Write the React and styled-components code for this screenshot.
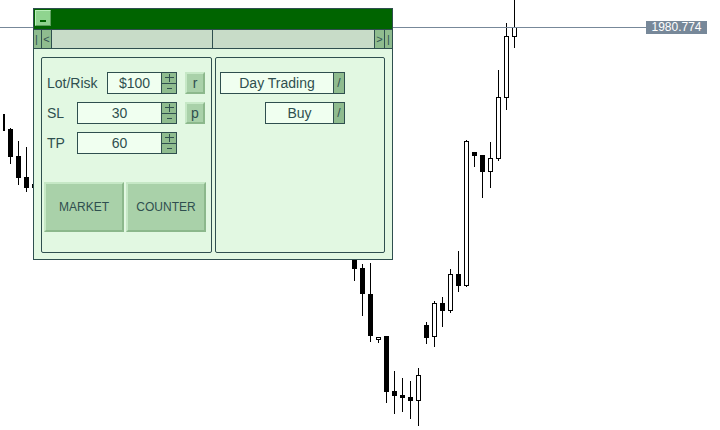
import React from "react";
import styled, { createGlobalStyle } from "styled-components";

const INK = "#2f4f4f";
const SEA = "#8fbc8f";
const FIELD = "#f0fff0";

const GlobalStyle = createGlobalStyle`
  html, body { margin: 0; padding: 0; background: #fff; overflow: hidden; }
  body { font-family: "Liberation Sans", Arial, sans-serif; }
`;

// [x, wickTop, wickBottom, bodyTop, bodyBottom, bull]
const candles = [
  [10, 128, 164, 129, 157, 0],
  [18, 141, 185, 156, 178, 0],
  [26, 147, 192, 177, 188, 0],
  [34, 150, 196, 184, 188, 0],
  [354, 200, 281, 200, 269, 0],
  [362, 264, 316, 268, 294, 0],
  [370, 263, 342, 294, 336, 0],
  [378, 337, 343, 337, 340, 1],
  [386, 336, 403, 336, 392, 0],
  [394, 371, 414, 391, 396, 0],
  [402, 378, 412, 395, 398, 0],
  [410, 381, 419, 397, 401, 0],
  [418, 368, 426, 375, 401, 1],
  [426, 322, 344, 325, 338, 0],
  [434, 301, 347, 303, 337, 1],
  [442, 297, 327, 303, 311, 0],
  [450, 269, 313, 274, 311, 1],
  [458, 251, 292, 274, 286, 0],
  [466, 140, 287, 141, 286, 1],
  [474, 152, 167, 152, 156, 0],
  [482, 155, 198, 155, 172, 0],
  [490, 142, 188, 158, 172, 1],
  [498, 70, 161, 97, 159, 1],
  [506, 23, 110, 36, 98, 1],
  [514, 0, 48, 27, 37, 1],
];

const Stage = styled.div`
  position: relative;
  width: 720px;
  height: 430px;
  overflow: hidden;
  background: #fff;
`;

const ChartSvg = styled.svg`
  position: absolute;
  left: 0;
  top: 0;
`;

const PriceTag = styled.div`
  position: absolute;
  left: 646px;
  top: 21px;
  width: 61px;
  height: 13px;
  background: #778899;
  color: #fff;
  font-size: 12px;
  line-height: 13px;
  text-align: center;
`;

const Panel = styled.div`
  position: absolute;
  left: 33px;
  top: 8px;
  width: 360px;
  height: 252px;
  box-sizing: border-box;
  border: 1px solid ${INK};
  background: #e2f8e2;
  display: flex;
  flex-direction: column;
  color: ${INK};
`;

const TitleBar = styled.div`
  height: 21px;
  box-sizing: border-box;
  background: #006400;
  border-bottom: 1px solid ${INK};
  padding: 1px 0 0 1px;
`;

const MinButton = styled.div`
  width: 16px;
  height: 16px;
  box-sizing: border-box;
  border: 1px solid;
  border-color: #b8eeb8 #5f9f5f #5f9f5f #b8eeb8;
  background: #8fd48f;
  display: flex;
  justify-content: center;
  align-items: flex-end;
  padding-bottom: 3px;
`;

const Dash = styled.div`
  width: 6px;
  height: 2px;
  background: #006400;
`;

const ScrollRow = styled.div`
  height: 19px;
  box-sizing: border-box;
  border-bottom: 1px solid ${INK};
  background: #c8dcc8;
  display: flex;
`;

const ScrollBtn = styled.div`
  width: ${(p) => p.$w}px;
  box-sizing: border-box;
  background: ${SEA};
  ${(p) => (p.$right ? `border-left: 1px solid ${INK};` : `border-right: 1px solid ${INK};`)}
  font-size: 11px;
  line-height: 18px;
  text-align: ${(p) => (p.$edge && !p.$right ? "left" : "center")};
  padding-left: ${(p) => (p.$edge && !p.$right ? 1 : 0)}px;
  color: ${INK};
`;

const Track = styled.div`
  flex: 1;
  display: flex;
`;

const TrackHalf = styled.div`
  width: 160px;
  border-right: 1px solid ${INK};
`;

const Body = styled.div`
  flex: 1;
  display: flex;
  gap: 3px;
  padding: 8px 7px 6px 7px;
`;

const Group = styled.div`
  width: ${(p) => p.$w}px;
  box-sizing: border-box;
  border: 1px solid ${INK};
  border-radius: 2px;
  display: flex;
  flex-direction: column;
  gap: 8px;
  padding-top: 14px;
  ${(p) => (p.$right ? "align-items: flex-end; padding-right: 39px;" : "")}
`;

const Row = styled.div`
  display: flex;
  align-items: center;
  height: 22px;
  padding: 0 6px 0 5px;
`;

const Label = styled.div`
  flex: 1;
  font-size: 14px;
`;

const Edit = styled.div`
  width: ${(p) => p.$w}px;
  height: 22px;
  box-sizing: border-box;
  border: 1px solid ${INK};
  background: ${FIELD};
  font-size: 14px;
  line-height: 20px;
  text-align: center;
`;

const Spin = styled.div`
  width: 15px;
  height: 22px;
  box-sizing: border-box;
  border: 1px solid ${INK};
  border-left: none;
  display: flex;
  flex-direction: column;
  background: ${SEA};
`;

const SpinHalf = styled.div`
  height: ${(p) => (p.$top ? 11 : 9)}px;
  box-sizing: border-box;
  ${(p) => (p.$top ? `border-bottom: 1px solid ${INK};` : "")}
  display: flex;
  justify-content: center;
  align-items: center;
`;

const SideButton = styled.div`
  width: 20px;
  height: 22px;
  margin-left: 8px;
  box-sizing: border-box;
  border: 2px solid;
  border-color: #c6e8c6 #8cb88c #8cb88c #c6e8c6;
  background: #a9d1a9;
  font-size: 14px;
  line-height: 18px;
  text-align: center;
  visibility: ${(p) => (p.$ghost ? "hidden" : "visible")};
`;

const ButtonRow = styled.div`
  display: flex;
  gap: 2px;
  padding-left: 2px;
  margin-top: 20px;
`;

const BigButton = styled.div`
  width: 80px;
  height: 50px;
  box-sizing: border-box;
  border: 2px solid;
  border-color: #c6e8c6 #8cb88c #8cb88c #c6e8c6;
  background: #a9d1a9;
  font-size: 12px;
  display: flex;
  align-items: center;
  justify-content: center;
`;

const Combo = styled.div`
  width: ${(p) => p.$w}px;
  height: 22px;
  box-sizing: border-box;
  border: 1px solid ${INK};
  display: flex;
`;

const ComboText = styled.div`
  flex: 1;
  background: ${FIELD};
  font-size: 14px;
  line-height: 20px;
  text-align: center;
`;

const ComboBtn = styled.div`
  width: 11px;
  box-sizing: border-box;
  border-left: 1px solid ${INK};
  background: ${SEA};
  font-size: 12px;
  line-height: 20px;
  text-align: center;
`;

function Candle({ d }) {
  const [x, wt, wb, top, bot, bull] = d;
  return (
    <g>
      <rect x={x} y={wt} width={1} height={wb - wt} fill="#000" />
      {bull ? (
        <rect x={x - 1.5} y={top + 0.5} width={4} height={bot - top - 1} fill="#fff" stroke="#000" strokeWidth={1} />
      ) : (
        <rect x={x - 2} y={top} width={5} height={bot - top} fill="#000" />
      )}
    </g>
  );
}

const PlusIcon = () => (
  <svg width="9" height="8" shapeRendering="crispEdges">
    <rect x="0" y="3" width="9" height="1" fill={INK} />
    <rect x="4" y="0" width="1" height="8" fill={INK} />
  </svg>
);

const MinusIcon = () => (
  <svg width="5" height="1" shapeRendering="crispEdges">
    <rect x="0" y="0" width="5" height="1" fill={INK} />
  </svg>
);

function NumberField({ label, value, width, side }) {
  return (
    <Row>
      <Label>{label}</Label>
      <Edit $w={width}>{value}</Edit>
      <Spin>
        <SpinHalf $top>
          <PlusIcon />
        </SpinHalf>
        <SpinHalf>
          <MinusIcon />
        </SpinHalf>
      </Spin>
      <SideButton $ghost={!side}>{side}</SideButton>
    </Row>
  );
}

export default function App() {
  return (
    <Stage>
      <GlobalStyle />
      <ChartSvg width="720" height="430" shapeRendering="crispEdges">
        <rect x={3} y={114} width={2} height={17} fill="#000" />
        {candles.map((d) => (
          <Candle key={d[0]} d={d} />
        ))}
        <rect x={0} y={27} width={646} height={1} fill="#778899" />
      </ChartSvg>
      <PriceTag>1980.774</PriceTag>

      <Panel>
        <TitleBar>
          <MinButton>
            <Dash />
          </MinButton>
        </TitleBar>
        <ScrollRow>
          <ScrollBtn $w={8} $edge>|</ScrollBtn>
          <ScrollBtn $w={10}>&lt;</ScrollBtn>
          <Track>
            <TrackHalf />
          </Track>
          <ScrollBtn $w={10} $right>&gt;</ScrollBtn>
          <ScrollBtn $w={8} $right $edge>|</ScrollBtn>
        </ScrollRow>
        <Body>
          <Group $w={171}>
            <NumberField label="Lot/Risk" value="$100" width={55} side="r" />
            <NumberField label="SL" value="30" width={85} side="p" />
            <NumberField label="TP" value="60" width={85} />
            <ButtonRow>
              <BigButton>MARKET</BigButton>
              <BigButton>COUNTER</BigButton>
            </ButtonRow>
          </Group>
          <Group $w={170} $right>
            <Combo $w={125}>
              <ComboText>Day Trading</ComboText>
              <ComboBtn>/</ComboBtn>
            </Combo>
            <Combo $w={80}>
              <ComboText>Buy</ComboText>
              <ComboBtn>/</ComboBtn>
            </Combo>
          </Group>
        </Body>
      </Panel>
    </Stage>
  );
}
